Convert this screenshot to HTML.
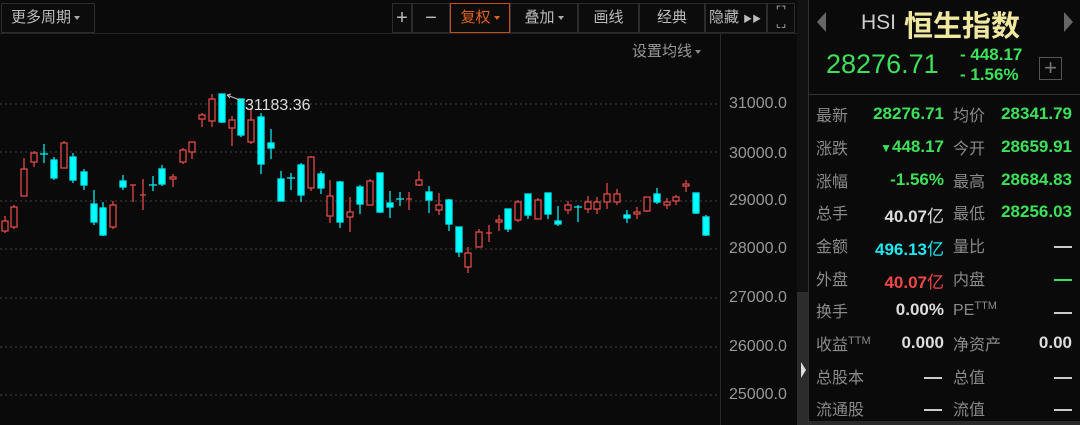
<!DOCTYPE html>
<html><head><meta charset="utf-8"><style>
*{margin:0;padding:0;box-sizing:border-box}
body{width:1080px;height:425px;background:#0a0a0a;overflow:hidden;position:relative;font-family:"Liberation Sans","Noto Sans CJK SC",sans-serif;color:#ccc}
.btn{position:absolute;top:3px;height:30px;border:1px solid #2c2c2c;background:#0c0c0c;color:#bbb;font-size:15px;line-height:28px;text-align:center;white-space:nowrap;overflow:hidden}
.tri{display:inline-block;width:0;height:0;border-left:3px solid transparent;border-right:3px solid transparent;border-top:4px solid #aaa;vertical-align:middle;margin-left:3px}
.ax{position:absolute;left:729px;font-size:16px;color:#999}
.lb{position:absolute;font-size:16px;color:#8a8a8a;white-space:nowrap;margin-top:-2px}
.v{position:absolute;font-size:17px;font-weight:bold;text-align:right;white-space:nowrap}
.g{color:#3de05a}
.dash{position:absolute;width:18px;height:2px;background:#ccc}
</style></head><body>
<div class="btn" style="left:1px;width:94px;font-size:15px;text-align:left;padding-left:9px">更多周期<span class="tri"></span></div>
<div class="btn" style="left:392px;width:20px;font-size:20px">+</div>
<div class="btn" style="left:412px;width:38px;font-size:20px">−</div>
<div class="btn" style="left:450px;width:60px;border-color:#c0501a;color:#e0601e">复权<span class="tri" style="border-top-color:#e0601e"></span></div>
<div class="btn" style="left:510px;width:68px">叠加<span class="tri"></span></div>
<div class="btn" style="left:578px;width:61px">画线</div>
<div class="btn" style="left:639px;width:66px">经典</div>
<div class="btn" style="left:705px;width:62px;text-align:left;padding-left:3px">隐藏 <span style="font-size:9px">▶▶</span></div>
<div class="btn" style="left:767px;width:28px;font-size:11px;line-height:13px;padding-top:1px;white-space:normal">⌜⌝<br>⌞⌟</div>
<div style="position:absolute;left:0;top:33px;width:797px;height:1px;background:#222"></div>
<div style="position:absolute;left:632px;top:40px;font-size:15px;color:#999">设置均线<span class="tri" style="border-top-color:#888"></span></div>
<div style="position:absolute;left:720px;top:34px;width:1px;height:391px;background:#2a2a2a"></div>
<div style="position:absolute;left:797px;top:0;width:11px;height:292px;background:#121212"></div>
<div style="position:absolute;left:797px;top:292px;width:11px;height:133px;background:#2c2c2c"></div>
<div style="position:absolute;left:801px;top:362px;width:0;height:0;border-top:8px solid transparent;border-bottom:8px solid transparent;border-left:5px solid #ddd"></div>
<div style="position:absolute;left:808px;top:0;width:1px;height:425px;background:#333"></div>
<div class="ax" style="top:95px">31000.0</div>
<div class="ax" style="top:145px">30000.0</div>
<div class="ax" style="top:192px">29000.0</div>
<div class="ax" style="top:240px">28000.0</div>
<div class="ax" style="top:289px">27000.0</div>
<div class="ax" style="top:338px">26000.0</div>
<div class="ax" style="top:386px">25000.0</div>
<svg style="position:absolute;left:0;top:0" width="720" height="425">
<g stroke="#444" stroke-dasharray="2,3">
<line x1="0" y1="104" x2="720" y2="104"/><line x1="0" y1="152" x2="720" y2="152"/><line x1="0" y1="201" x2="720" y2="201"/><line x1="0" y1="249" x2="720" y2="249"/><line x1="0" y1="298" x2="720" y2="298"/><line x1="0" y1="347" x2="720" y2="347"/><line x1="0" y1="395" x2="720" y2="395"/>
</g>
<g stroke="#e04848" stroke-width="1.3" fill="#0a0a0a">
<line x1="5" y1="216" x2="5" y2="233"/><rect x="2" y="221" width="6" height="10"/>
<line x1="14" y1="205" x2="14" y2="229"/><rect x="11" y="207" width="6" height="20"/>
<line x1="24" y1="158" x2="24" y2="196"/><rect x="21" y="169" width="6" height="27"/>
<line x1="34" y1="151" x2="34" y2="167"/><rect x="31" y="153" width="6" height="9"/>
<line x1="64" y1="141" x2="64" y2="168"/><rect x="61" y="143" width="6" height="25"/>
<line x1="113" y1="201" x2="113" y2="229"/><rect x="110" y="205" width="6" height="22"/>
<line x1="133" y1="185" x2="133" y2="202"/><line x1="130" y1="185" x2="136" y2="185"/>
<line x1="143" y1="179" x2="143" y2="210"/><line x1="140" y1="195" x2="146" y2="195"/>
<line x1="173" y1="174" x2="173" y2="187"/><rect x="170" y="177" width="6" height="2"/>
<line x1="183" y1="148" x2="183" y2="164"/><rect x="180" y="150" width="6" height="12"/>
<line x1="192" y1="142" x2="192" y2="159"/><rect x="189" y="142" width="6" height="10"/>
<line x1="202" y1="113" x2="202" y2="127"/><rect x="199" y="115" width="6" height="4"/>
<line x1="212" y1="94" x2="212" y2="127"/><rect x="209" y="99" width="6" height="22"/>
<line x1="232" y1="116" x2="232" y2="146"/><rect x="229" y="120" width="6" height="8"/>
<line x1="251" y1="108" x2="251" y2="144"/><rect x="248" y="120" width="6" height="22"/>
<line x1="311" y1="156" x2="311" y2="191"/><rect x="308" y="157" width="6" height="31"/>
<line x1="330" y1="180" x2="330" y2="223"/><rect x="327" y="196" width="6" height="20"/>
<line x1="350" y1="197" x2="350" y2="232"/><rect x="347" y="212" width="6" height="5"/>
<line x1="370" y1="179" x2="370" y2="205"/><rect x="367" y="181" width="6" height="24"/>
<line x1="409" y1="192" x2="409" y2="210"/><line x1="406" y1="199" x2="412" y2="199"/>
<line x1="419" y1="171" x2="419" y2="186"/><rect x="416" y="180" width="6" height="5"/>
<line x1="439" y1="193" x2="439" y2="215"/><rect x="436" y="205" width="6" height="5"/>
<line x1="468" y1="247" x2="468" y2="273"/><rect x="465" y="253" width="6" height="14"/>
<line x1="479" y1="229" x2="479" y2="247"/><rect x="476" y="232" width="6" height="15"/>
<line x1="489" y1="225" x2="489" y2="242"/><line x1="486" y1="233" x2="492" y2="233"/>
<line x1="499" y1="215" x2="499" y2="231"/><rect x="496" y="220" width="6" height="2"/>
<line x1="518" y1="200" x2="518" y2="222"/><rect x="515" y="202" width="6" height="18"/>
<line x1="538" y1="198" x2="538" y2="219"/><rect x="535" y="200" width="6" height="19"/>
<line x1="568" y1="201" x2="568" y2="214"/><rect x="565" y="205" width="6" height="5"/>
<line x1="588" y1="196" x2="588" y2="213"/><rect x="585" y="202" width="6" height="7"/>
<line x1="597" y1="197" x2="597" y2="214"/><rect x="594" y="202" width="6" height="7"/>
<line x1="607" y1="183" x2="607" y2="209"/><rect x="604" y="194" width="6" height="8"/>
<line x1="617" y1="189" x2="617" y2="205"/><rect x="614" y="194" width="6" height="8"/>
<line x1="637" y1="207" x2="637" y2="219"/><rect x="634" y="212" width="6" height="2"/>
<line x1="647" y1="197" x2="647" y2="212"/><rect x="644" y="197" width="6" height="14"/>
<line x1="667" y1="198" x2="667" y2="209"/><rect x="664" y="202" width="6" height="3"/>
<line x1="676" y1="195" x2="676" y2="205"/><rect x="673" y="197" width="6" height="4"/>
<line x1="686" y1="180" x2="686" y2="192"/><rect x="683" y="184" width="6" height="2"/>
</g>
<g stroke="#00e8f0" stroke-width="1.3" fill="#00ffff">
<line x1="44" y1="144" x2="44" y2="163"/><line x1="40" y1="154" x2="48" y2="154"/>
<line x1="54" y1="157" x2="54" y2="180"/><rect x="51" y="160" width="6" height="18"/>
<line x1="73" y1="153" x2="73" y2="183"/><rect x="70" y="157" width="6" height="23"/>
<line x1="84" y1="169" x2="84" y2="190"/><rect x="81" y="172" width="6" height="13"/>
<line x1="94" y1="190" x2="94" y2="225"/><rect x="91" y="204" width="6" height="18"/>
<line x1="103" y1="202" x2="103" y2="236"/><rect x="100" y="208" width="6" height="27"/>
<line x1="123" y1="175" x2="123" y2="190"/><rect x="120" y="181" width="6" height="6"/>
<line x1="153" y1="176" x2="153" y2="191"/><line x1="149" y1="185" x2="157" y2="185"/>
<line x1="162" y1="165" x2="162" y2="186"/><rect x="159" y="169" width="6" height="15"/>
<line x1="222" y1="94" x2="222" y2="123"/><rect x="219" y="94" width="6" height="28"/>
<line x1="241" y1="99" x2="241" y2="137"/><rect x="238" y="99" width="6" height="36"/>
<line x1="261" y1="113" x2="261" y2="174"/><rect x="258" y="117" width="6" height="47"/>
<line x1="271" y1="129" x2="271" y2="159"/><rect x="268" y="143" width="6" height="5"/>
<line x1="281" y1="171" x2="281" y2="201"/><rect x="278" y="179" width="6" height="22"/>
<line x1="291" y1="173" x2="291" y2="190"/><line x1="287" y1="178" x2="295" y2="178"/>
<line x1="301" y1="163" x2="301" y2="202"/><rect x="298" y="165" width="6" height="30"/>
<line x1="321" y1="171" x2="321" y2="194"/><rect x="318" y="174" width="6" height="14"/>
<line x1="340" y1="181" x2="340" y2="228"/><rect x="337" y="182" width="6" height="40"/>
<line x1="360" y1="185" x2="360" y2="214"/><rect x="357" y="187" width="6" height="17"/>
<line x1="380" y1="173" x2="380" y2="213"/><rect x="377" y="173" width="6" height="39"/>
<line x1="390" y1="191" x2="390" y2="218"/><rect x="387" y="203" width="6" height="4"/>
<line x1="400" y1="192" x2="400" y2="206"/><line x1="396" y1="199" x2="404" y2="199"/>
<line x1="429" y1="186" x2="429" y2="213"/><rect x="426" y="192" width="6" height="8"/>
<line x1="449" y1="199" x2="449" y2="231"/><rect x="446" y="200" width="6" height="24"/>
<line x1="459" y1="227" x2="459" y2="257"/><rect x="456" y="227" width="6" height="25"/>
<line x1="508" y1="209" x2="508" y2="232"/><rect x="505" y="209" width="6" height="20"/>
<line x1="528" y1="194" x2="528" y2="219"/><rect x="525" y="194" width="6" height="21"/>
<line x1="548" y1="193" x2="548" y2="219"/><rect x="545" y="193" width="6" height="21"/>
<line x1="558" y1="206" x2="558" y2="226"/><rect x="555" y="221" width="6" height="3"/>
<line x1="578" y1="205" x2="578" y2="222"/><line x1="574" y1="207" x2="582" y2="207"/>
<line x1="627" y1="210" x2="627" y2="223"/><rect x="624" y="215" width="6" height="3"/>
<line x1="657" y1="188" x2="657" y2="204"/><rect x="654" y="194" width="6" height="8"/>
<line x1="696" y1="193" x2="696" y2="214"/><rect x="693" y="193" width="6" height="20"/>
<line x1="706" y1="215" x2="706" y2="236"/><rect x="703" y="217" width="6" height="18"/>
</g>
<line x1="227" y1="95" x2="242" y2="101" stroke="#bbb"/>
<path d="M227 95 l4 -1 M227 95 l3 3" stroke="#bbb" fill="none"/>
<text x="245" y="110" fill="#ddd" font-size="16" font-family="Liberation Sans">31183.36</text>
</svg>
<div style="position:absolute;left:817px;top:12px;width:0;height:0;border-top:10px solid transparent;border-bottom:10px solid transparent;border-right:9px solid #666"></div>
<div style="position:absolute;left:1064px;top:12px;width:0;height:0;border-top:10px solid transparent;border-bottom:10px solid transparent;border-left:9px solid #666"></div>
<div style="position:absolute;left:861px;top:11px;font-size:21px;color:#ccc">HSI</div>
<div style="position:absolute;left:904px;top:3px;font-size:29px;color:#f0e8a0;font-weight:bold">恒生指数</div>
<div style="position:absolute;left:826px;top:49px;font-size:27px;color:#3de05a">28276.71</div>
<div style="position:absolute;left:960px;top:45px;font-size:17px;font-weight:bold;color:#3de05a;line-height:20px">- 448.17<br>- 1.56%</div>
<div style="position:absolute;left:1039px;top:57px;width:23px;height:23px;border:1px solid #555;color:#777;font-size:22px;line-height:20px;text-align:center">+</div>
<div style="position:absolute;left:809px;top:94px;width:271px;height:1px;background:#333"></div>
<div class="lb" style="left:816px;top:104px">最新</div><div class="v g" style="left:850px;width:94px;top:104px">28276.71</div>
<div class="lb" style="left:953px;top:104px">均价</div><div class="v g" style="left:980px;width:92px;top:104px">28341.79</div>
<div class="lb" style="left:816px;top:137px">涨跌</div><div class="v g" style="left:850px;width:94px;top:137px"><span style="font-size:12px">▼</span>448.17</div>
<div class="lb" style="left:953px;top:137px">今开</div><div class="v g" style="left:980px;width:92px;top:137px">28659.91</div>
<div class="lb" style="left:816px;top:170px">涨幅</div><div class="v g" style="left:850px;width:94px;top:170px">-1.56%</div>
<div class="lb" style="left:953px;top:170px">最高</div><div class="v g" style="left:980px;width:92px;top:170px">28684.83</div>
<div class="lb" style="left:816px;top:202px">总手</div><div class="v" style="left:850px;width:94px;top:202px;color:#ddd">40.07<span style="font-weight:normal">亿</span></div>
<div class="lb" style="left:953px;top:202px">最低</div><div class="v g" style="left:980px;width:92px;top:202px">28256.03</div>
<div class="lb" style="left:816px;top:235px">金额</div><div class="v" style="left:850px;width:94px;top:235px;color:#1ee8f0">496.13<span style="font-weight:normal">亿</span></div>
<div class="lb" style="left:953px;top:235px">量比</div><div class="dash" style="left:1054px;top:246px"></div>
<div class="lb" style="left:816px;top:268px">外盘</div><div class="v" style="left:850px;width:94px;top:268px;color:#f04848">40.07<span style="font-weight:normal">亿</span></div>
<div class="lb" style="left:953px;top:268px">内盘</div><div class="dash" style="left:1054px;top:279px;background:#3de05a"></div>
<div class="lb" style="left:816px;top:300px">换手</div><div class="v" style="left:850px;width:94px;top:300px;color:#ddd">0.00%</div>
<div class="lb" style="left:953px;top:302px">PE<span style="font-size:11px;vertical-align:6px">TTM</span></div><div class="dash" style="left:1054px;top:312px"></div>
<div class="lb" style="left:816px;top:333px">收益<span style="font-size:11px;vertical-align:6px">TTM</span></div><div class="v" style="left:850px;width:94px;top:333px;color:#ddd">0.000</div>
<div class="lb" style="left:953px;top:333px">净资产</div><div class="v" style="left:980px;width:92px;top:333px;color:#ddd">0.00</div>
<div class="lb" style="left:816px;top:366px">总股本</div><div class="dash" style="left:924px;top:377px"></div>
<div class="lb" style="left:953px;top:366px">总值</div><div class="dash" style="left:1054px;top:377px"></div>
<div class="lb" style="left:816px;top:398px">流通股</div><div class="dash" style="left:924px;top:409px"></div>
<div class="lb" style="left:953px;top:398px">流值</div><div class="dash" style="left:1054px;top:409px"></div>
<div style="position:absolute;left:809px;top:421px;width:271px;height:4px;background:#2a2a2a"></div>
</body></html>
